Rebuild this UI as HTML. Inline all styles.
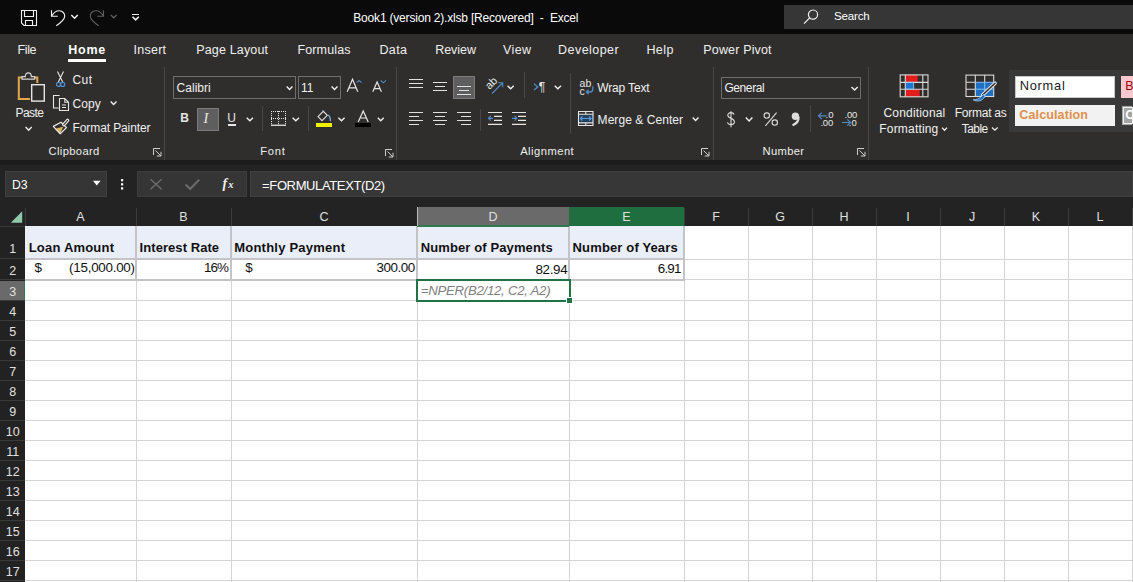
<!DOCTYPE html>
<html><head><meta charset="utf-8"><style>
html,body{margin:0;padding:0;}
body{width:1133px;height:582px;overflow:hidden;position:relative;background:#232323;font-family:"Liberation Sans",sans-serif;}
.r{position:absolute;box-sizing:border-box;}
.t{position:absolute;white-space:pre;line-height:1;font-family:"Liberation Sans",sans-serif;}
</style></head><body>
<div class="r" style="left:0px;top:0px;width:1133px;height:34px;background:#0a0a0a;"></div>
<div class="r" style="left:0px;top:34px;width:1133px;height:126px;background:#2f2e2d;"></div>
<svg class="r" style="left:20px;top:9px" width="18" height="18" viewBox="0 0 18 18" fill="none"><path d="M1.5 1.5H16.5V16.5H4L1.5 14Z M4.5 1.5V7.5H13.5V1.5 M5.5 16.5V11.5H12.5V16.5" stroke="#f2f2f2" stroke-width="1.1"/></svg>
<svg class="r" style="left:49px;top:9px" width="18" height="18" viewBox="0 0 18 18" fill="none"><path d="M2.5 1.2V7.2H8.8 M2.6 7.1C4.8 3.2 7.6 1.6 10.3 1.7C13.6 1.9 15.9 4.4 15.7 7.4C15.5 10 12.5 13.2 7.3 16.8" stroke="#f2f2f2" stroke-width="1.1"/></svg>
<svg class="r" style="left:88px;top:9px" width="18" height="18" viewBox="0 0 18 18" fill="none"><path d="M15.5 1.2V7.2H9.2 M15.4 7.1C13.2 3.2 10.4 1.6 7.7 1.7C4.4 1.9 2.1 4.4 2.3 7.4C2.5 10 5.5 13.2 10.7 16.8" stroke="#5e5e5e" stroke-width="1.1"/></svg>
<div class="t" style="left:353.30px;top:12.14px;font-size:12px;color:#ffffff;letter-spacing:-0.192px;">Book1 (version 2).xlsb [Recovered]  -  Excel</div>
<div class="r" style="left:784px;top:5px;width:349px;height:24px;background:#363636;"></div>
<svg class="r" style="left:802px;top:8px" width="18" height="18" viewBox="0 0 18 18" fill="none"><circle cx="11" cy="6.6" r="4.6" stroke="#f0f0f0" stroke-width="1.2"/><path d="M7.7 9.9L2 15.6" stroke="#f0f0f0" stroke-width="1.3"/></svg>
<div class="t" style="left:834.00px;top:11.07px;font-size:11.5px;color:#ffffff;letter-spacing:-0.147px;">Search</div>
<div class="t" style="left:17.50px;top:44.22px;font-size:12.5px;color:#f0f0f0;letter-spacing:-0.385px;">File</div>
<div class="t" style="left:133.60px;top:44.22px;font-size:12.5px;color:#f0f0f0;letter-spacing:0.227px;">Insert</div>
<div class="t" style="left:196.20px;top:44.22px;font-size:12.5px;color:#f0f0f0;letter-spacing:0.160px;">Page Layout</div>
<div class="t" style="left:297.40px;top:44.22px;font-size:12.5px;color:#f0f0f0;letter-spacing:0.144px;">Formulas</div>
<div class="t" style="left:379.50px;top:44.22px;font-size:12.5px;color:#f0f0f0;letter-spacing:0.331px;">Data</div>
<div class="t" style="left:435.20px;top:44.22px;font-size:12.5px;color:#f0f0f0;letter-spacing:-0.040px;">Review</div>
<div class="t" style="left:503.00px;top:44.22px;font-size:12.5px;color:#f0f0f0;letter-spacing:0.375px;">View</div>
<div class="t" style="left:558.10px;top:44.22px;font-size:12.5px;color:#f0f0f0;letter-spacing:0.452px;">Developer</div>
<div class="t" style="left:646.40px;top:44.22px;font-size:12.5px;color:#f0f0f0;letter-spacing:0.427px;">Help</div>
<div class="t" style="left:703.30px;top:44.22px;font-size:12.5px;color:#f0f0f0;letter-spacing:0.160px;">Power Pivot</div>
<div class="t" style="left:68.30px;top:44.22px;font-size:12.5px;color:#ffffff;font-weight:700;letter-spacing:0.755px;">Home</div>
<div class="r" style="left:68px;top:59px;width:38px;height:3px;background:#ffffff;"></div>
<div class="r" style="left:164px;top:67px;width:1px;height:93px;background:#474747;"></div>
<div class="r" style="left:396px;top:67px;width:1px;height:93px;background:#474747;"></div>
<div class="r" style="left:713px;top:67px;width:1px;height:93px;background:#474747;"></div>
<div class="r" style="left:868px;top:67px;width:1px;height:93px;background:#474747;"></div>
<svg class="r" style="left:15px;top:70px" width="32" height="34" viewBox="0 0 32 34" fill="none"><path d="M7 7.4H3.8V29H15 M19.7 7.4H22.3V13" stroke="#e0a84a" stroke-width="2"/><path d="M7 9.2V6.6H10.3C10.3 4.2 11.4 2.8 13.3 2.8C15.2 2.8 16.3 4.2 16.3 6.6H19.7V9.2Z" stroke="#d8d8d8" stroke-width="1.2"/><rect x="16.7" y="14.7" width="12.6" height="16.4" stroke="#e6e6e6" stroke-width="1.4"/></svg>
<div class="t" style="left:15.50px;top:106.64px;font-size:12px;color:#f0f0f0;letter-spacing:-0.547px;">Paste</div>
<svg class="r" style="left:52px;top:70px" width="17" height="18" viewBox="0 0 17 18" fill="none"><path d="M5.5 1.6L10.8 12.2 M11.5 1.6L6.2 12.2" stroke="#e6e6e6" stroke-width="1.1"/><circle cx="6.5" cy="14.4" r="2" stroke="#4f8fd3" stroke-width="1.2"/><circle cx="10.7" cy="14.4" r="2" stroke="#4f8fd3" stroke-width="1.2"/></svg>
<div class="t" style="left:72.40px;top:73.64px;font-size:12px;color:#f0f0f0;letter-spacing:0.456px;">Cut</div>
<svg class="r" style="left:52px;top:94px" width="18" height="18" viewBox="0 0 18 18" fill="none"><path d="M7.6 1.5H1.5V14H6.8" stroke="#e6e6e6" stroke-width="1.1"/><path d="M7.5 4.5H12.8L16.5 8.2V16.5H7.5Z M12.8 4.5V8.2H16.5 M10 11H14 M10 13.5H14" stroke="#e6e6e6" stroke-width="1.1"/></svg>
<div class="t" style="left:72.40px;top:97.84px;font-size:12px;color:#f0f0f0;letter-spacing:0.095px;">Copy</div>
<svg class="r" style="left:52px;top:117px" width="18" height="18" viewBox="0 0 18 18" fill="none"><path d="M3.2 11.8L11.2 9.8L8.2 16.6Z" fill="#d9b65c"/><path d="M1.3 9.4L9 5.3L14.5 10.6L8.2 16.8Z" stroke="#ececec" stroke-width="1.2" stroke-linejoin="round"/><path d="M15.6 3.4L11.8 7.6" stroke="#ececec" stroke-width="3.4" stroke-linecap="round"/><path d="M15.6 3.4L11.8 7.6" stroke="#2f2e2d" stroke-width="1.1" stroke-linecap="round"/></svg>
<div class="t" style="left:72.60px;top:121.94px;font-size:12px;color:#f0f0f0;letter-spacing:-0.112px;">Format Painter</div>
<div class="t" style="left:48.50px;top:146.32px;font-size:11.2px;color:#eeeeee;letter-spacing:0.364px;">Clipboard</div>
<svg class="r" style="left:153px;top:148px" width="9" height="9" viewBox="0 0 9 9" fill="none"><path d="M0.5 7V0.5H7 M2.5 2.5L7.8 7.8 M8 3.8V8H3.8" stroke="#d0d0d0" stroke-width="1"/></svg>
<div class="r" style="left:173px;top:76px;width:123px;height:23px;background:#2f2e2d;box-shadow:inset 0 0 0 1px #6e6e6e;"></div>
<div class="t" style="left:176.50px;top:81.64px;font-size:12px;color:#f0f0f0;letter-spacing:0.047px;">Calibri</div>
<div class="r" style="left:298px;top:76px;width:43px;height:23px;background:#2f2e2d;box-shadow:inset 0 0 0 1px #6e6e6e;"></div>
<div class="t" style="left:301.00px;top:81.64px;font-size:12px;color:#f0f0f0;">11</div>
<svg class="r" style="left:346px;top:78px" width="18" height="15" viewBox="0 0 18 15" fill="none"><path d="M1.2 13.8L6.5 1.2L11.8 13.8 M3.3 9.8H9.7" stroke="#e6e6e6" stroke-width="1.2"/><polyline points="10.6,4.6 13.1,2.5 15.6,4.6" stroke="#4f8ac8" stroke-width="1.1"/></svg>
<svg class="r" style="left:371px;top:78px" width="18" height="15" viewBox="0 0 18 15" fill="none"><path d="M1.8 13.8L6.1 4L10.4 13.8 M3.5 10.6H8.7" stroke="#e6e6e6" stroke-width="1.2"/><polyline points="9.7,2.3 12.3,4.8 15,2.3" stroke="#4f8ac8" stroke-width="1.1"/></svg>
<div class="t" style="left:180.30px;top:112.24px;font-size:12px;color:#e6e6e6;font-weight:700;">B</div>
<div class="r" style="left:197px;top:108px;width:22px;height:23px;background:#5e5e5e;box-shadow:inset 0 0 0 1px #7c7c7c;"></div>
<div class="t" style="left:203.60px;top:110.73px;font-size:14.5px;color:#e8e8e8;font-style:italic;font-family:'Liberation Serif',serif;">I</div>
<div class="t" style="left:227.20px;top:112.24px;font-size:12px;color:#e6e6e6;">U</div>
<div class="r" style="left:227.6px;top:124.4px;width:8.2px;height:1.2px;background:#e6e6e6;"></div>
<div class="r" style="left:262px;top:106px;width:1px;height:25px;background:#474747;"></div>
<svg class="r" style="left:269.5px;top:110px" width="17" height="17" viewBox="0 0 17 17" fill="none"><g fill="#e6e6e6"><rect x="1" y="1" width="1" height="1"/><rect x="1" y="1" width="1" height="1"/><rect x="15" y="1" width="1" height="1"/><rect x="1" y="8" width="1" height="1"/><rect x="8" y="1" width="1" height="1"/><rect x="3" y="1" width="1" height="1"/><rect x="1" y="3" width="1" height="1"/><rect x="15" y="3" width="1" height="1"/><rect x="3" y="8" width="1" height="1"/><rect x="8" y="3" width="1" height="1"/><rect x="5" y="1" width="1" height="1"/><rect x="1" y="5" width="1" height="1"/><rect x="15" y="5" width="1" height="1"/><rect x="5" y="8" width="1" height="1"/><rect x="8" y="5" width="1" height="1"/><rect x="7" y="1" width="1" height="1"/><rect x="1" y="7" width="1" height="1"/><rect x="15" y="7" width="1" height="1"/><rect x="7" y="8" width="1" height="1"/><rect x="8" y="7" width="1" height="1"/><rect x="9" y="1" width="1" height="1"/><rect x="1" y="9" width="1" height="1"/><rect x="15" y="9" width="1" height="1"/><rect x="9" y="8" width="1" height="1"/><rect x="8" y="9" width="1" height="1"/><rect x="11" y="1" width="1" height="1"/><rect x="1" y="11" width="1" height="1"/><rect x="15" y="11" width="1" height="1"/><rect x="11" y="8" width="1" height="1"/><rect x="8" y="11" width="1" height="1"/><rect x="13" y="1" width="1" height="1"/><rect x="1" y="13" width="1" height="1"/><rect x="15" y="13" width="1" height="1"/><rect x="13" y="8" width="1" height="1"/><rect x="8" y="13" width="1" height="1"/><rect x="15" y="1" width="1" height="1"/><rect x="1" y="15" width="1" height="1"/><rect x="15" y="15" width="1" height="1"/><rect x="15" y="8" width="1" height="1"/><rect x="8" y="15" width="1" height="1"/><rect x="1" y="14.6" width="15" height="1.3"/></g></svg>
<div class="r" style="left:308px;top:106px;width:1px;height:25px;background:#474747;"></div>
<svg class="r" style="left:315px;top:110px" width="18" height="14" viewBox="0 0 18 14" fill="none"><path d="M3 6.6L8.3 1.3L12.3 5.3L7 10.6Z" stroke="#e6e6e6" stroke-width="1.1"/><path d="M8.3 1.3L7.5 0.5 M12.8 5C14.8 6 15.6 8 15.2 11.2" stroke="#7fb2e0" stroke-width="1.3"/></svg>
<div class="r" style="left:316px;top:123px;width:16px;height:4px;background:#f0f000;"></div>
<svg class="r" style="left:356px;top:109px" width="15" height="14" viewBox="0 0 15 14" fill="none"><path d="M2.2 13.1L7.2 2L12.2 13.1 M4.1 9H10.3" stroke="#e6e6e6" stroke-width="1.2"/></svg>
<div class="r" style="left:355px;top:123px;width:16px;height:4px;background:#000000;"></div>
<div class="t" style="left:260.20px;top:146.32px;font-size:11.2px;color:#eeeeee;letter-spacing:0.803px;">Font</div>
<svg class="r" style="left:385px;top:148.5px" width="9" height="9" viewBox="0 0 9 9" fill="none"><path d="M0.5 7V0.5H7 M2.5 2.5L7.8 7.8 M8 3.8V8H3.8" stroke="#d0d0d0" stroke-width="1"/></svg>
<div class="r" style="left:453px;top:76px;width:22px;height:23px;background:#5e5e5e;box-shadow:inset 0 0 0 1px #7c7c7c;"></div>
<svg class="r" style="left:485px;top:76px" width="20" height="20" viewBox="0 0 20 20" fill="none"><text x="0" y="0" transform="translate(4.5,14) rotate(-45)" font-family="Liberation Sans" font-size="11" fill="#e6e6e6">ab</text><path d="M7 17.5L17.5 7 M13.2 6.8H17.7V11.3" stroke="#4f8ac8" stroke-width="1.1"/></svg>
<div class="r" style="left:524px;top:72px;width:1px;height:26px;background:#474747;"></div>
<div class="t" style="left:538.80px;top:80.64px;font-size:12px;color:#e6e6e6;">¶</div>
<div class="r" style="left:570px;top:73px;width:1px;height:61px;background:#474747;"></div>
<div class="r" style="left:479.5px;top:109px;width:1px;height:22px;background:#474747;"></div>
<div class="t" style="left:579.4px;top:78.2px;font-size:10.5px;color:#e6e6e6;letter-spacing:0.2px">ab</div>
<div class="t" style="left:579.4px;top:85.6px;font-size:10.5px;color:#e6e6e6">c</div>
<div class="t" style="left:597.20px;top:82.04px;font-size:12px;color:#f0f0f0;letter-spacing:-0.147px;">Wrap Text</div>
<svg class="r" style="left:577px;top:110px" width="17" height="17" viewBox="0 0 17 17" fill="none"><rect x="1.5" y="4.2" width="14.5" height="8.7" fill="#24425f"/><path d="M1.5 1.5H16V15.5H1.5Z M1.5 4.2H16 M1.5 12.9H16 M8.75 1.5V4.2 M8.75 12.9V15.5" stroke="#e6e6e6" stroke-width="1.1"/><path d="M3.4 8.5H14.1 M5.4 6.5L3.4 8.5L5.4 10.5 M12.1 6.5L14.1 8.5L12.1 10.5" stroke="#5d9ad6" stroke-width="1.1"/></svg>
<div class="t" style="left:597.60px;top:113.84px;font-size:12px;color:#f0f0f0;letter-spacing:0.054px;">Merge &amp; Center</div>
<div class="t" style="left:520.20px;top:146.32px;font-size:11.2px;color:#eeeeee;letter-spacing:0.469px;">Alignment</div>
<svg class="r" style="left:701px;top:148.3px" width="9" height="9" viewBox="0 0 9 9" fill="none"><path d="M0.5 7V0.5H7 M2.5 2.5L7.8 7.8 M8 3.8V8H3.8" stroke="#d0d0d0" stroke-width="1"/></svg>
<div class="r" style="left:721px;top:76.5px;width:140px;height:22.5px;background:#2f2e2d;box-shadow:inset 0 0 0 1px #6e6e6e;"></div>
<div class="t" style="left:724.40px;top:81.84px;font-size:12px;color:#f0f0f0;letter-spacing:-0.401px;">General</div>
<svg class="r" style="left:725px;top:110px" width="12" height="18" viewBox="0 0 12 18" fill="none"><path d="M9.2 4.6C8.6 3.2 7.3 2.6 6 2.6C4 2.6 2.8 3.8 2.8 5.2C2.8 8.8 9.4 7.6 9.4 11.8C9.4 13.5 8 14.6 6 14.6C4.4 14.6 3 13.8 2.5 12.3 M6 1.2V17.2" stroke="#dcdcdc" stroke-width="1.1"/></svg>
<svg class="r" style="left:762px;top:111px" width="18" height="16" viewBox="0 0 18 16" fill="none"><circle cx="4.8" cy="4.6" r="2.7" stroke="#dcdcdc" stroke-width="1.1"/><circle cx="12.8" cy="11.6" r="2.7" stroke="#dcdcdc" stroke-width="1.1"/><path d="M14.6 1.6L3.4 14.8" stroke="#dcdcdc" stroke-width="1.1"/></svg>
<svg class="r" style="left:789px;top:111px" width="13" height="16" viewBox="0 0 13 16" fill="none"><circle cx="6.4" cy="5.3" r="3.7" fill="#dcdcdc"/><path d="M9.6 5.8C9.8 9.5 7.5 12.8 3.5 14.2" stroke="#dcdcdc" stroke-width="2.2"/></svg>
<div class="r" style="left:810px;top:104.5px;width:1px;height:27px;background:#474747;"></div>
<div class="t" style="left:825.6px;top:110.4px;font-size:9.5px;color:#e6e6e6">.0</div>
<div class="t" style="left:820.4px;top:117.6px;font-size:9.5px;color:#e6e6e6;letter-spacing:-0.2px">.00</div>
<div class="t" style="left:844.6px;top:110.4px;font-size:9.5px;color:#e6e6e6;letter-spacing:-0.2px">.00</div>
<div class="t" style="left:848.8px;top:117.6px;font-size:9.5px;color:#e6e6e6">.0</div>
<div class="t" style="left:762.50px;top:146.32px;font-size:11.2px;color:#eeeeee;letter-spacing:0.341px;">Number</div>
<svg class="r" style="left:857px;top:148.3px" width="9" height="9" viewBox="0 0 9 9" fill="none"><path d="M0.5 7V0.5H7 M2.5 2.5L7.8 7.8 M8 3.8V8H3.8" stroke="#d0d0d0" stroke-width="1"/></svg>
<svg class="r" style="left:899px;top:74px" width="31" height="24" viewBox="0 0 31 24" fill="none"><rect x="6.3" y="0.9" width="12.4" height="7.5" fill="#e31c1c"/><rect x="6.3" y="8.4" width="8.3" height="6.9" fill="#1f74d0"/><rect x="6.3" y="15.3" width="14.4" height="7.5" fill="#e31c1c"/><g stroke="#dcdcdc" stroke-width="1.1"><rect x="1.2" y="0.9" width="27.8" height="21.9"/><path d="M1.2 8.4H29 M1.2 15.3H29 M6.3 0.9V22.8 M23.8 0.9V22.8"/></g><path d="M6.3 8.4H14.6V15.3H6.3" stroke="#8cc8f0" stroke-width="0.9"/></svg>
<div class="t" style="left:883.50px;top:106.74px;font-size:12px;color:#f0f0f0;letter-spacing:0.175px;">Conditional</div>
<div class="t" style="left:879.30px;top:122.84px;font-size:12px;color:#f0f0f0;letter-spacing:0.182px;">Formatting</div>
<svg class="r" style="left:965px;top:74px" width="32" height="29" viewBox="0 0 32 29" fill="none"><rect x="10.3" y="8.3" width="18.4" height="14.2" fill="#1f6fc4"/><g stroke="#dcdcdc" stroke-width="1.1"><rect x="1" y="1.1" width="27.7" height="21.4"/><path d="M1 8.3H10.3 M1 15.2H10.3 M10.3 1.1V22.5 M19.7 1.1V8.3"/></g><path d="M10.3 8.3H28.7 M10.3 15.2H28.7 M19.7 8.3V22.5" stroke="#7fbff0" stroke-width="1"/><path d="M30 9.2L17.6 21" stroke="#e0e0e0" stroke-width="3.6" stroke-linecap="round"/><path d="M30 9.2L17.6 21" stroke="#2f2e2d" stroke-width="1.4" stroke-linecap="round"/><path d="M18.5 20.3C16.5 22 15.5 25.5 8.2 25.8C11.5 27.8 17.5 27.5 19.8 22.6Z" fill="#1f6fc4" stroke="#9cc8ef" stroke-width="0.9"/></svg>
<div class="t" style="left:954.70px;top:106.74px;font-size:12px;color:#f0f0f0;letter-spacing:-0.239px;">Format as</div>
<div class="t" style="left:961.70px;top:122.84px;font-size:12px;color:#f0f0f0;letter-spacing:-0.547px;">Table</div>
<div class="r" style="left:1009px;top:70px;width:124px;height:62px;background:#393939;"></div>
<div class="r" style="left:1015px;top:76px;width:100px;height:22px;background:#ffffff;box-shadow:inset 0 0 0 1px #c8c8c8;"></div>
<div class="t" style="left:1019.70px;top:80.06px;font-size:12.8px;color:#1a1a1a;letter-spacing:0.770px;">Normal</div>
<div class="r" style="left:1121px;top:76px;width:12px;height:22px;background:#ffc7ce;"></div>
<div class="t" style="left:1125.30px;top:80.32px;font-size:12.5px;color:#9c0006;">B</div>
<div class="r" style="left:1015px;top:104.6px;width:100px;height:21px;background:#f2f2f2;"></div>
<div class="t" style="left:1019.30px;top:108.62px;font-size:12.5px;color:#e0904a;font-weight:700;letter-spacing:0.133px;">Calculation</div>
<div class="r" style="left:1121px;top:104.6px;width:12px;height:21px;background:#a5a5a5;box-shadow:inset 0 0 0 1px #3f3f3f;"></div>
<div class="r" style="left:1123px;top:106.6px;width:10px;height:17px;box-shadow:inset 0 0 0 1px #f0f0f0;"></div>
<div class="t" style="left:1125.30px;top:108.62px;font-size:12.5px;color:#ffffff;font-weight:700;">C</div>
<div class="r" style="left:0px;top:160px;width:1133px;height:5px;background:#1c1c1c;"></div>
<div class="r" style="left:0px;top:165px;width:1133px;height:32px;background:#232323;"></div>
<div class="r" style="left:5px;top:171px;width:102px;height:26px;background:#353535;box-shadow:inset 0 0 0 1px #3f3f3f;"></div>
<div class="t" style="left:12.00px;top:178.67px;font-size:12.2px;color:#ffffff;">D3</div>
<div class="r" style="left:137px;top:171px;width:110px;height:26px;background:#353535;box-shadow:inset 0 0 0 1px #3d3d3d;"></div>
<div class="t" style="left:222.40px;top:176.95px;font-size:14px;color:#f0f0f0;font-weight:700;font-style:italic;font-family:'Liberation Serif',serif;">f</div>
<div class="t" style="left:228.20px;top:179.91px;font-size:10.5px;color:#f0f0f0;font-weight:700;font-style:italic;font-family:'Liberation Serif',serif;">x</div>
<div class="r" style="left:250px;top:171px;width:883px;height:26px;background:#373737;box-shadow:inset 0 0 0 1px #3f3f3f;"></div>
<div class="t" style="left:262.10px;top:178.90px;font-size:13px;color:#ffffff;letter-spacing:-0.373px;">=FORMULATEXT(D2)</div>
<div class="r" style="left:0px;top:197px;width:1133px;height:29px;background:#232323;"></div>
<div class="r" style="left:25px;top:226px;width:1108px;height:356px;background:#ffffff;"></div>
<div class="r" style="left:0px;top:226px;width:25px;height:356px;background:#222222;"></div>
<div class="r" style="left:25px;top:226px;width:659px;height:32px;background:#e9eef8;"></div>
<div class="r" style="left:136px;top:226px;width:1px;height:356px;background:#d4d4d4;"></div>
<div class="r" style="left:231px;top:226px;width:1px;height:356px;background:#d4d4d4;"></div>
<div class="r" style="left:417px;top:226px;width:1px;height:356px;background:#d4d4d4;"></div>
<div class="r" style="left:569px;top:226px;width:1px;height:356px;background:#d4d4d4;"></div>
<div class="r" style="left:684px;top:226px;width:1px;height:356px;background:#d4d4d4;"></div>
<div class="r" style="left:748px;top:226px;width:1px;height:356px;background:#d4d4d4;"></div>
<div class="r" style="left:812px;top:226px;width:1px;height:356px;background:#d4d4d4;"></div>
<div class="r" style="left:876px;top:226px;width:1px;height:356px;background:#d4d4d4;"></div>
<div class="r" style="left:940px;top:226px;width:1px;height:356px;background:#d4d4d4;"></div>
<div class="r" style="left:1004px;top:226px;width:1px;height:356px;background:#d4d4d4;"></div>
<div class="r" style="left:1068px;top:226px;width:1px;height:356px;background:#d4d4d4;"></div>
<div class="r" style="left:1132px;top:226px;width:1px;height:356px;background:#d4d4d4;"></div>
<div class="r" style="left:25px;top:300px;width:1108px;height:1px;background:#d4d4d4;"></div>
<div class="r" style="left:25px;top:320px;width:1108px;height:1px;background:#d4d4d4;"></div>
<div class="r" style="left:25px;top:340px;width:1108px;height:1px;background:#d4d4d4;"></div>
<div class="r" style="left:25px;top:360px;width:1108px;height:1px;background:#d4d4d4;"></div>
<div class="r" style="left:25px;top:380px;width:1108px;height:1px;background:#d4d4d4;"></div>
<div class="r" style="left:25px;top:400px;width:1108px;height:1px;background:#d4d4d4;"></div>
<div class="r" style="left:25px;top:420px;width:1108px;height:1px;background:#d4d4d4;"></div>
<div class="r" style="left:25px;top:440px;width:1108px;height:1px;background:#d4d4d4;"></div>
<div class="r" style="left:25px;top:460px;width:1108px;height:1px;background:#d4d4d4;"></div>
<div class="r" style="left:25px;top:480px;width:1108px;height:1px;background:#d4d4d4;"></div>
<div class="r" style="left:25px;top:500px;width:1108px;height:1px;background:#d4d4d4;"></div>
<div class="r" style="left:25px;top:520px;width:1108px;height:1px;background:#d4d4d4;"></div>
<div class="r" style="left:25px;top:540px;width:1108px;height:1px;background:#d4d4d4;"></div>
<div class="r" style="left:25px;top:560px;width:1108px;height:1px;background:#d4d4d4;"></div>
<div class="r" style="left:25px;top:580px;width:1108px;height:1px;background:#d4d4d4;"></div>
<div class="r" style="left:684px;top:259px;width:449px;height:1px;background:#d4d4d4;"></div>
<div class="r" style="left:684px;top:279px;width:449px;height:1px;background:#d4d4d4;"></div>
<div class="r" style="left:135px;top:226px;width:2px;height:55px;background:#c3c3c8;"></div>
<div class="r" style="left:230px;top:226px;width:2px;height:55px;background:#c3c3c8;"></div>
<div class="r" style="left:416px;top:226px;width:2px;height:55px;background:#c3c3c8;"></div>
<div class="r" style="left:568px;top:226px;width:2px;height:55px;background:#c3c3c8;"></div>
<div class="r" style="left:683px;top:226px;width:2px;height:55px;background:#c3c3c8;"></div>
<div class="r" style="left:25px;top:258px;width:660px;height:2px;background:#c3c3c8;"></div>
<div class="r" style="left:25px;top:279px;width:660px;height:2px;background:#c3c3c8;"></div>
<div class="r" style="left:136px;top:208px;width:1px;height:18px;background:#3c3c3c;"></div>
<div class="r" style="left:231px;top:208px;width:1px;height:18px;background:#3c3c3c;"></div>
<div class="r" style="left:417px;top:208px;width:1px;height:18px;background:#3c3c3c;"></div>
<div class="r" style="left:569px;top:208px;width:1px;height:18px;background:#3c3c3c;"></div>
<div class="r" style="left:684px;top:208px;width:1px;height:18px;background:#3c3c3c;"></div>
<div class="r" style="left:748px;top:208px;width:1px;height:18px;background:#3c3c3c;"></div>
<div class="r" style="left:812px;top:208px;width:1px;height:18px;background:#3c3c3c;"></div>
<div class="r" style="left:876px;top:208px;width:1px;height:18px;background:#3c3c3c;"></div>
<div class="r" style="left:940px;top:208px;width:1px;height:18px;background:#3c3c3c;"></div>
<div class="r" style="left:1004px;top:208px;width:1px;height:18px;background:#3c3c3c;"></div>
<div class="r" style="left:1068px;top:208px;width:1px;height:18px;background:#3c3c3c;"></div>
<div class="r" style="left:1132px;top:208px;width:1px;height:18px;background:#3c3c3c;"></div>
<div class="r" style="left:25px;top:208px;width:1px;height:18px;background:#3c3c3c;"></div>
<div class="r" style="left:417px;top:207px;width:152px;height:18px;background:#6a6a6a;"></div>
<div class="r" style="left:417px;top:224.5px;width:152px;height:2px;background:#2f7a4f;"></div>
<div class="r" style="left:417px;top:207px;width:1px;height:19px;background:#bdbdbd;"></div>
<div class="r" style="left:569px;top:207px;width:115px;height:19px;background:#1e6e3f;"></div>
<div class="t" style="left:76.33px;top:210.92px;font-size:12.5px;color:#e0e0e0;">A</div>
<div class="t" style="left:179.33px;top:210.92px;font-size:12.5px;color:#e0e0e0;">B</div>
<div class="t" style="left:319.48px;top:210.92px;font-size:12.5px;color:#e0e0e0;">C</div>
<div class="t" style="left:488.48px;top:210.92px;font-size:12.5px;color:#e0e0e0;">D</div>
<div class="t" style="left:622.33px;top:210.92px;font-size:12.5px;color:#e0e0e0;">E</div>
<div class="t" style="left:712.18px;top:210.92px;font-size:12.5px;color:#e0e0e0;">F</div>
<div class="t" style="left:775.13px;top:210.92px;font-size:12.5px;color:#e0e0e0;">G</div>
<div class="t" style="left:839.48px;top:210.92px;font-size:12.5px;color:#e0e0e0;">H</div>
<div class="t" style="left:906.26px;top:210.92px;font-size:12.5px;color:#e0e0e0;">I</div>
<div class="t" style="left:968.88px;top:210.92px;font-size:12.5px;color:#e0e0e0;">J</div>
<div class="t" style="left:1031.83px;top:210.92px;font-size:12.5px;color:#e0e0e0;">K</div>
<div class="t" style="left:1096.52px;top:210.92px;font-size:12.5px;color:#e0e0e0;">L</div>
<div class="r" style="left:0px;top:281px;width:25px;height:19px;background:#6a6a6a;"></div>
<div class="r" style="left:23.5px;top:281px;width:1.5px;height:19px;background:#2f7a4f;"></div>
<div class="r" style="left:0px;top:226px;width:25px;height:1px;background:#3a3a3a;"></div>
<div class="r" style="left:0px;top:258px;width:25px;height:1px;background:#3a3a3a;"></div>
<div class="r" style="left:0px;top:279px;width:25px;height:1px;background:#3a3a3a;"></div>
<div class="r" style="left:0px;top:300px;width:25px;height:1px;background:#3a3a3a;"></div>
<div class="r" style="left:0px;top:320px;width:25px;height:1px;background:#3a3a3a;"></div>
<div class="r" style="left:0px;top:340px;width:25px;height:1px;background:#3a3a3a;"></div>
<div class="r" style="left:0px;top:360px;width:25px;height:1px;background:#3a3a3a;"></div>
<div class="r" style="left:0px;top:380px;width:25px;height:1px;background:#3a3a3a;"></div>
<div class="r" style="left:0px;top:400px;width:25px;height:1px;background:#3a3a3a;"></div>
<div class="r" style="left:0px;top:420px;width:25px;height:1px;background:#3a3a3a;"></div>
<div class="r" style="left:0px;top:440px;width:25px;height:1px;background:#3a3a3a;"></div>
<div class="r" style="left:0px;top:460px;width:25px;height:1px;background:#3a3a3a;"></div>
<div class="r" style="left:0px;top:480px;width:25px;height:1px;background:#3a3a3a;"></div>
<div class="r" style="left:0px;top:500px;width:25px;height:1px;background:#3a3a3a;"></div>
<div class="r" style="left:0px;top:520px;width:25px;height:1px;background:#3a3a3a;"></div>
<div class="r" style="left:0px;top:540px;width:25px;height:1px;background:#3a3a3a;"></div>
<div class="r" style="left:0px;top:560px;width:25px;height:1px;background:#3a3a3a;"></div>
<div class="r" style="left:0px;top:580px;width:25px;height:1px;background:#3a3a3a;"></div>
<div class="t" style="left:9.32px;top:243.22px;font-size:12.5px;color:#e0e0e0;">1</div>
<div class="t" style="left:9.32px;top:265.22px;font-size:12.5px;color:#e0e0e0;">2</div>
<div class="t" style="left:9.32px;top:285.82px;font-size:12.5px;color:#e0e0e0;">3</div>
<div class="t" style="left:9.32px;top:305.82px;font-size:12.5px;color:#e0e0e0;">4</div>
<div class="t" style="left:9.32px;top:325.82px;font-size:12.5px;color:#e0e0e0;">5</div>
<div class="t" style="left:9.32px;top:345.82px;font-size:12.5px;color:#e0e0e0;">6</div>
<div class="t" style="left:9.32px;top:365.82px;font-size:12.5px;color:#e0e0e0;">7</div>
<div class="t" style="left:9.32px;top:385.82px;font-size:12.5px;color:#e0e0e0;">8</div>
<div class="t" style="left:9.32px;top:405.82px;font-size:12.5px;color:#e0e0e0;">9</div>
<div class="t" style="left:5.85px;top:425.82px;font-size:12.5px;color:#e0e0e0;">10</div>
<div class="t" style="left:6.31px;top:445.82px;font-size:12.5px;color:#e0e0e0;">11</div>
<div class="t" style="left:5.85px;top:465.82px;font-size:12.5px;color:#e0e0e0;">12</div>
<div class="t" style="left:5.85px;top:485.82px;font-size:12.5px;color:#e0e0e0;">13</div>
<div class="t" style="left:5.85px;top:505.82px;font-size:12.5px;color:#e0e0e0;">14</div>
<div class="t" style="left:5.85px;top:525.82px;font-size:12.5px;color:#e0e0e0;">15</div>
<div class="t" style="left:5.85px;top:545.82px;font-size:12.5px;color:#e0e0e0;">16</div>
<div class="t" style="left:5.85px;top:565.82px;font-size:12.5px;color:#e0e0e0;">17</div>
<div class="t" style="left:28.70px;top:241.00px;font-size:13px;color:#111111;font-weight:700;letter-spacing:0.202px;">Loan Amount</div>
<div class="t" style="left:139.60px;top:241.00px;font-size:13px;color:#111111;font-weight:700;letter-spacing:0.062px;">Interest Rate</div>
<div class="t" style="left:234.20px;top:241.00px;font-size:13px;color:#111111;font-weight:700;letter-spacing:0.227px;">Monthly Payment</div>
<div class="t" style="left:420.70px;top:241.00px;font-size:13px;color:#111111;font-weight:700;letter-spacing:0.115px;">Number of Payments</div>
<div class="t" style="left:572.60px;top:241.00px;font-size:13px;color:#111111;font-weight:700;letter-spacing:0.143px;">Number of Years</div>
<div class="t" style="left:34.40px;top:261.46px;font-size:13.4px;color:#111111;">$</div>
<div class="t" style="left:69.10px;top:261.46px;font-size:13.4px;color:#111111;letter-spacing:-0.260px;">(15,000.00)</div>
<div class="t" style="left:203.90px;top:261.46px;font-size:13.4px;color:#111111;letter-spacing:-0.856px;">16%</div>
<div class="t" style="left:245.30px;top:261.46px;font-size:13.4px;color:#111111;">$</div>
<div class="t" style="left:376.60px;top:261.46px;font-size:13.4px;color:#111111;letter-spacing:-0.454px;">300.00</div>
<div class="t" style="left:535.50px;top:263.26px;font-size:13.4px;color:#111111;letter-spacing:-0.354px;">82.94</div>
<div class="t" style="left:657.70px;top:261.66px;font-size:13.4px;color:#111111;letter-spacing:-0.754px;">6.91</div>
<div class="t" style="left:420.70px;top:284.13px;font-size:13.2px;color:#808080;font-style:italic;letter-spacing:-0.255px;">=NPER(B2/12, C2, A2)</div>
<div class="r" style="left:416px;top:279px;width:155px;height:22.5px;border:2px solid #217346;"></div>
<div class="r" style="left:567px;top:298px;width:5px;height:5px;background:#217346;box-shadow:0 0 0 1px #fff;"></div>
<svg class="r" style="left:0px;top:0px" width="1133" height="582" viewBox="0 0 1133 582" fill="none"><path d="M132 14.5H139" stroke="#f2f2f2" stroke-width="1"/><path d="M409 79.5H423" stroke="#e0e0e0" stroke-width="1.0"/><path d="M409 83.5H423" stroke="#e0e0e0" stroke-width="1.0"/><path d="M409 87.5H423" stroke="#e0e0e0" stroke-width="1.0"/><path d="M433.0 82.5H447.0" stroke="#e0e0e0" stroke-width="1.0"/><path d="M435.0 86.5H445.0" stroke="#e0e0e0" stroke-width="1.0"/><path d="M433.0 90.5H447.0" stroke="#e0e0e0" stroke-width="1.0"/><path d="M457.0 86.5H471.0" stroke="#e0e0e0" stroke-width="1.0"/><path d="M459.0 90.5H469.0" stroke="#e0e0e0" stroke-width="1.0"/><path d="M457.0 94.5H471.0" stroke="#e0e0e0" stroke-width="1.0"/><polyline points="534,83.8 537.8,86.9 534,90" stroke="#4f8ac8" stroke-width="1.3"/><path d="M409 112.5H423" stroke="#e0e0e0" stroke-width="1.0"/><path d="M409 116.5H419" stroke="#e0e0e0" stroke-width="1.0"/><path d="M409 120.5H423" stroke="#e0e0e0" stroke-width="1.0"/><path d="M409 124.5H419" stroke="#e0e0e0" stroke-width="1.0"/><path d="M433.0 112.5H447.0" stroke="#e0e0e0" stroke-width="1.0"/><path d="M435.0 116.5H445.0" stroke="#e0e0e0" stroke-width="1.0"/><path d="M433.0 120.5H447.0" stroke="#e0e0e0" stroke-width="1.0"/><path d="M435.0 124.5H445.0" stroke="#e0e0e0" stroke-width="1.0"/><path d="M457 112.5H471" stroke="#e0e0e0" stroke-width="1.0"/><path d="M461 116.5H471" stroke="#e0e0e0" stroke-width="1.0"/><path d="M457 120.5H471" stroke="#e0e0e0" stroke-width="1.0"/><path d="M461 124.5H471" stroke="#e0e0e0" stroke-width="1.0"/><path d="M488 112.5H502 M494 116.4H502 M494 120.3H502 M488 124.4H502" stroke="#e6e6e6" stroke-width="1.2"/><path d="M488.5 118.3H493 M490.8 116L488.5 118.3L490.8 120.6" stroke="#4f8ac8" stroke-width="1.2"/><path d="M512 112.5H526 M518 116.4H526 M518 120.3H526 M512 124.4H526" stroke="#e6e6e6" stroke-width="1.2"/><path d="M512 118.3H516.8 M514.6 116L516.8 118.3L514.6 120.6" stroke="#4f8ac8" stroke-width="1.2"/><path d="M592.8 86.2V89.2C592.8 91 591.8 92 590 92H586.5 M588.6 89.8L586.3 92L588.6 94.2" stroke="#4f8ac8" stroke-width="1.3"/><path d="M818.5 115.8H826.5 M821.7 112.6L818.5 115.8L821.7 119" stroke="#4f8ac8" stroke-width="1.2"/><path d="M842 122.5H850.5 M847.3 119.3L850.5 122.5L847.3 125.7" stroke="#4f8ac8" stroke-width="1.2"/><polygon points="93,180.7 100.6,180.7 96.8,185.4" fill="#ffffff"/><rect x="121" y="179.1" width="2.2" height="2.2" fill="#ffffff"/><rect x="121" y="183.20000000000002" width="2.2" height="2.2" fill="#ffffff"/><rect x="121" y="187.3" width="2.2" height="2.2" fill="#ffffff"/><path d="M150.5 179.2L161.6 189.3 M161.6 179.2L150.5 189.3" stroke="#6c6c6c" stroke-width="1.4"/><polyline points="185.6,184.5 190.2,189 199.2,179.6" stroke="#6c6c6c" stroke-width="2"/><polygon points="10.8,222.8 22.2,222.8 22.2,211.2" fill="#90c8a8"/><polyline points="71.3,15 74.55,18.2 77.8,15" stroke="#f2f2f2" stroke-width="1.5"/><polyline points="110.9,15 113.75,17.8 116.6,15" stroke="#5e5e5e" stroke-width="1.3"/><polyline points="132.5,16.8 135.65,19.9 138.8,16.8" stroke="#f2f2f2" stroke-width="1.6"/><polyline points="25.6,127 28.65,130.2 31.7,127" stroke="#f0f0f0" stroke-width="1.4"/><polyline points="110.7,101.6 113.6,104.6 116.5,101.6" stroke="#f0f0f0" stroke-width="1.4"/><polyline points="286.7,86.6 289.54999999999995,89.6 292.4,86.6" stroke="#f0f0f0" stroke-width="1.4"/><polyline points="331.6,86.6 334.55,89.6 337.5,86.6" stroke="#f0f0f0" stroke-width="1.4"/><polyline points="246.7,117.8 249.85,120.8 253,117.8" stroke="#f0f0f0" stroke-width="1.4"/><polyline points="292.6,117.8 295.8,120.8 299,117.8" stroke="#f0f0f0" stroke-width="1.4"/><polyline points="338.4,117.7 341.5,120.8 344.6,117.7" stroke="#f0f0f0" stroke-width="1.4"/><polyline points="377.8,117.7 380.75,120.8 383.7,117.7" stroke="#f0f0f0" stroke-width="1.4"/><polyline points="507.6,85.8 510.65000000000003,88.8 513.7,85.8" stroke="#f0f0f0" stroke-width="1.4"/><polyline points="554.7,85.8 557.85,88.8 561,85.8" stroke="#f0f0f0" stroke-width="1.4"/><polyline points="692.7,117.4 695.6,120.5 698.5,117.4" stroke="#f0f0f0" stroke-width="1.4"/><polyline points="851.5,86.9 854.6,90 857.7,86.9" stroke="#f0f0f0" stroke-width="1.4"/><polyline points="745.8,117.6 749.0999999999999,120.9 752.4,117.6" stroke="#f0f0f0" stroke-width="1.4"/><polyline points="942,127.6 944.5,130.2 947,127.6" stroke="#f0f0f0" stroke-width="1.3"/><polyline points="992,127.6 994.85,130.2 997.7,127.6" stroke="#f0f0f0" stroke-width="1.3"/></svg>
</body></html>
